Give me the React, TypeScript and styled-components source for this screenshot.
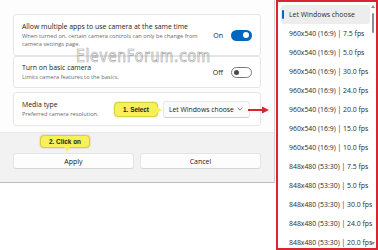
import styled, { createGlobalStyle } from 'styled-components';

const GlobalStyle = createGlobalStyle`
  html, body {
    margin: 0;
    padding: 0;
    background: #ffffff;
    font-family: 'Open Sans', 'Noto Sans', Arial, sans-serif;
  }
`;

const colors = {
  text: '#1b1b1b',
  sub: '#6b6b6b',
  cardBorder: '#e6e6e6',
  footer: '#f2f2f2',
  accent: '#0067c0',
  red: '#d7262e',
  callout: '#f7f05a',
};

const Screen = styled.div({
  display: 'flex',
  width: '378px',
  height: '250px',
  overflow: 'hidden',
  background: '#ffffff',
});

const Dialog = styled.div({
  position: 'relative',
  display: 'flex',
  flexDirection: 'column',
  width: '274px',
  alignSelf: 'flex-start',
  borderRight: '1px solid #d4d4d4',
  borderBottom: '1px solid #bdbdbd',
  background: '#fdfdfd',
});

const Body = styled.div({
  display: 'flex',
  flexDirection: 'column',
  padding: '14px 13px 6px',
});

const Card = styled.div<{ $height: number; $gap?: number }>((p) => ({
  display: 'flex',
  alignItems: 'center',
  height: `${p.$height}px`,
  marginTop: `${p.$gap ?? 0}px`,
  padding: '0 8px',
  background: '#ffffff',
  border: `1px solid ${colors.cardBorder}`,
  borderRadius: '3px',
  boxSizing: 'border-box',
}));

const CardText = styled.div({
  display: 'flex',
  flexDirection: 'column',
  flex: 1,
  minWidth: 0,
});

const Title = styled.span({
  fontSize: '6.9px',
  lineHeight: '9.5px',
  color: colors.text,
  whiteSpace: 'nowrap',
});

const Sub = styled.span({
  fontSize: '5.7px',
  lineHeight: '8px',
  color: colors.sub,
  whiteSpace: 'nowrap',
});

const ToggleLabel = styled.span({
  fontSize: '7px',
  color: colors.text,
  marginRight: '8px',
});

const Toggle = styled.div<{ $on: boolean }>((p) => ({
  position: 'relative',
  width: '21px',
  height: '11px',
  borderRadius: '6px',
  boxSizing: 'border-box',
  background: p.$on ? colors.accent : '#ffffff',
  border: p.$on ? 'none' : '1px solid #7a7a7a',
  '&::after': {
    content: '""',
    position: 'absolute',
    top: p.$on ? '2.5px' : '2px',
    left: p.$on ? '12px' : '2px',
    width: p.$on ? '6px' : '5px',
    height: p.$on ? '6px' : '5px',
    borderRadius: '50%',
    background: p.$on ? '#ffffff' : '#4a4a4a',
  },
}));

const Watermark = styled.div({
  position: 'absolute',
  left: '76px',
  top: '49px',
  fontFamily: "'DejaVu Sans', sans-serif",
  fontSize: '14px',
  lineHeight: '11px',
  letterSpacing: '0.6px',
  color: 'transparent',
  WebkitTextStroke: '0.55px #a4a4a4',
  transform: 'scaleY(1.3)',
  transformOrigin: 'top left',
  pointerEvents: 'none',
});

const Callout = styled.div<{ $pointer: 'right' | 'down' }>((p) => ({
  position: 'relative',
  display: 'flex',
  alignItems: 'center',
  justifyContent: 'center',
  height: p.$pointer === 'right' ? '15px' : '13px',
  padding: '0 8px',
  background: colors.callout,
  border: '1px solid #d8cf3a',
  borderRadius: '4px',
  fontFamily: "'Liberation Sans', Arial, sans-serif",
  fontWeight: 700,
  fontSize: '6.4px',
  color: '#1a1a1a',
  whiteSpace: 'nowrap',
  boxSizing: 'border-box',
  boxShadow: '0 0 2px rgba(120,110,0,0.35)',
  '&::after':
    p.$pointer === 'right'
      ? {
          content: '""',
          position: 'absolute',
          right: '-5px',
          top: '4px',
          borderTop: '3px solid transparent',
          borderBottom: '3px solid transparent',
          borderLeft: `5px solid ${colors.callout}`,
        }
      : {
          content: '""',
          position: 'absolute',
          bottom: '-5px',
          left: '23px',
          borderLeft: '3px solid transparent',
          borderRight: '3px solid transparent',
          borderTop: `5px solid ${colors.callout}`,
        },
}));

const SelectRow = styled.div({
  display: 'flex',
  alignItems: 'center',
  gap: '5px',
  marginRight: '2px',
});

const SelectBox = styled.div({
  display: 'flex',
  alignItems: 'center',
  justifyContent: 'space-between',
  width: '87px',
  height: '17px',
  padding: '0 6px 0 5px',
  boxSizing: 'border-box',
  background: '#fbfbfb',
  border: '1px solid #e8e8e8',
  borderBottomColor: '#d0d0d0',
  borderRadius: '3px',
  fontSize: '6.8px',
  color: colors.text,
  whiteSpace: 'nowrap',
});

const RedArrow = styled.svg({
  position: 'absolute',
  left: '248px',
  top: '106px',
});

const Footer = styled.div({
  position: 'relative',
  display: 'flex',
  gap: '6px',
  padding: '20px 13px 13px',
  background: colors.footer,
  borderTop: '1px solid #e9e9e9',
});

const FooterCallout = styled.div({
  position: 'absolute',
  left: '40px',
  top: '2px',
  display: 'flex',
});

const Button = styled.div({
  flex: 1,
  height: '16px',
  display: 'flex',
  alignItems: 'center',
  justifyContent: 'center',
  background: '#fdfdfd',
  border: '1px solid #e5e5e5',
  borderBottomColor: '#d6d6d6',
  borderRadius: '3px',
  boxSizing: 'border-box',
  fontSize: '7px',
  color: colors.text,
});

const ListPanel = styled.div({
  position: 'relative',
  width: '102px',
  height: '250px',
  marginLeft: '1px',
  border: `2px solid ${colors.red}`,
  boxSizing: 'border-box',
  background: '#ffffff',
  display: 'flex',
  flexDirection: 'column',
  padding: '3px 6px 0 3px',
});

const Option = styled.div<{ $selected?: boolean }>((p) => ({
  position: 'relative',
  display: 'flex',
  alignItems: 'center',
  flexShrink: 0,
  height: '19px',
  paddingLeft: '8px',
  borderRadius: '3px',
  background: p.$selected ? '#ededed' : 'transparent',
  fontSize: '6.9px',
  color: '#2a2a2a',
  whiteSpace: 'nowrap',
  '&::before': p.$selected
    ? {
        content: '""',
        position: 'absolute',
        left: '1px',
        top: '5px',
        width: '2px',
        height: '9px',
        borderRadius: '1px',
        background: colors.accent,
      }
    : {},
}));

const Scrollbar = styled.div({
  position: 'absolute',
  top: '1px',
  right: '1px',
  bottom: '1px',
  width: '4px',
  display: 'flex',
  flexDirection: 'column',
  alignItems: 'center',
  justifyContent: 'space-between',
});

const ScrollThumb = styled.div({
  position: 'absolute',
  top: '10px',
  width: '2px',
  height: '20px',
  borderRadius: '1px',
  background: '#8d8d8d',
});

const ScrollArrow = styled.div<{ $up: boolean }>((p) => ({
  width: 0,
  height: 0,
  borderLeft: '2px solid transparent',
  borderRight: '2px solid transparent',
  ...(p.$up
    ? { borderBottom: '3px solid #8d8d8d', marginTop: '2px' }
    : { borderTop: '3px solid #8d8d8d', marginBottom: '2px' }),
}));

const options = [
  'Let Windows choose',
  '960x540 (16:9) | 7.5 fps',
  '960x540 (16:9) | 5.0 fps',
  '960x540 (16:9) | 30.0 fps',
  '960x540 (16:9) | 24.0 fps',
  '960x540 (16:9) | 20.0 fps',
  '960x540 (16:9) | 15.0 fps',
  '960x540 (16:9) | 10.0 fps',
  '848x480 (53:30) | 7.5 fps',
  '848x480 (53:30) | 5.0 fps',
  '848x480 (53:30) | 30.0 fps',
  '848x480 (53:30) | 24.0 fps',
  '848x480 (53:30) | 20.0 fps',
];

export default function App() {
  return (
    <>
      <GlobalStyle />
      <Screen>
        <Dialog>
          <Body>
            <Card $height={42}>
              <CardText>
                <Title>Allow multiple apps to use camera at the same time</Title>
                <Sub>When turned on, certain camera controls can only be change from</Sub>
                <Sub>camera settings page.</Sub>
              </CardText>
              <ToggleLabel>On</ToggleLabel>
              <Toggle $on />
            </Card>
            <Card $height={32}>
              <CardText>
                <Title>Turn on basic camera</Title>
                <Sub>Limits camera features to the basics.</Sub>
              </CardText>
              <ToggleLabel>Off</ToggleLabel>
              <Toggle $on={false} />
            </Card>
            <Card $height={34} $gap={4}>
              <CardText>
                <Title>Media type</Title>
                <Sub>Preferred camera resolution.</Sub>
              </CardText>
              <SelectRow>
                <Callout $pointer="right">1. Select</Callout>
                <SelectBox>
                  <span>Let Windows choose</span>
                  <svg width="6" height="4" viewBox="0 0 6 4">
                    <path d="M0.5 0.8 L3 3.2 L5.5 0.8" fill="none" stroke="#555" strokeWidth="0.7" />
                  </svg>
                </SelectBox>
              </SelectRow>
            </Card>
          </Body>
          <Footer>
            <FooterCallout>
              <Callout $pointer="down">2. Click on</Callout>
            </FooterCallout>
            <Button>Apply</Button>
            <Button>Cancel</Button>
          </Footer>
          <Watermark>ElevenForum.com</Watermark>
          <RedArrow width="22" height="8" viewBox="0 0 22 8">
            <line x1="0" y1="4" x2="16" y2="4" stroke={colors.red} strokeWidth="2" />
            <polygon points="14,0.5 21,4 14,7.5" fill={colors.red} />
          </RedArrow>
        </Dialog>
        <ListPanel>
          {options.map((o, i) => (
            <Option key={o} $selected={i === 0}>
              {o}
            </Option>
          ))}
          <Scrollbar>
            <ScrollArrow $up />
            <ScrollThumb />
            <ScrollArrow $up={false} />
          </Scrollbar>
        </ListPanel>
      </Screen>
    </>
  );
}
